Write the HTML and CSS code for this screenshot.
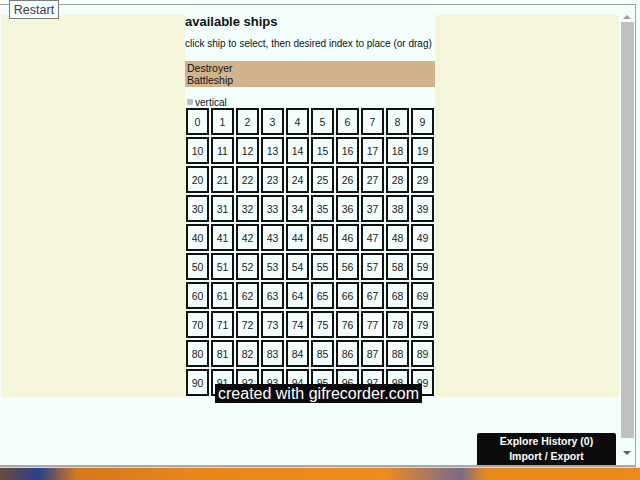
FILE: index.html
```html
<!DOCTYPE html>
<html>
<head>
<meta charset="utf-8">
<link rel="stylesheet" href="styles.css">
</head>
<body>
<div class="window">
  <button class="restart">Restart</button>
  <div class="layout">
    <div class="side"></div>
    <div class="center">
      <h1 class="title">available ships</h1>
      <p class="hint">click ship to select, then desired index to place (or drag)</p>
      <div class="ships">
        <div class="ship">Destroyer</div>
        <div class="ship">Battleship</div>
      </div>
      <label class="vertical"><span class="check"></span>vertical</label>
      <div class="grid" id="grid"></div>
    </div>
    <div class="side"></div>
    <div class="scrollbar">
      <span class="arrow up"></span>
      <span class="thumb"></span>
      <span class="arrow down"></span>
    </div>
  </div>
  <div class="watermark">created with gifrecorder.com</div>
  <div class="history">
    <div>Explore History (0)</div>
    <div>Import / Export</div>
  </div>
</div>
<div class="desktop"></div>
<script>
  var g = document.getElementById('grid');
  for (var i = 0; i < 100; i++) {
    var c = document.createElement('div');
    c.className = 'cell';
    c.textContent = i;
    g.appendChild(c);
  }
</script>
</body>
</html>
```
FILE: styles.css
```css
html, body {
  margin: 0;
  padding: 0;
  height: 480px;
  overflow: hidden;
  background: #f4fffd;
  font-family: "Liberation Sans", Arial, sans-serif;
}
.window {
  position: relative;
  margin-top: 4px;
  height: 460px;
  border-top: 1px solid #a3a3a3;
  border-right: 1px solid #a3a3a3;
  border-bottom: 2px solid #a9a9a9;
  width: 635px;
}
.restart {
  position: absolute;
  left: 9px;
  top: -5px;
  height: 19px;
  width: 50px;
  padding: 0;
  border: 1px solid #7a7a7a;
  background: #f4fffd;
  color: #4a3550;
  font-family: "Liberation Sans", Arial, sans-serif;
  font-size: 12.5px;
  line-height: 16px;
}
.layout {
  display: flex;
  padding-top: 10px;
  height: 450px;
}
.side {
  width: 184px;
  height: 382px;
  background: #f5f5dc;
}
.layout > .side:first-child {
  margin-left: 1px;
}
.center {
  width: 250px;
  display: flex;
  flex-direction: column;
  height: 382px;
  overflow: hidden;
}
.title {
  margin: 0;
  font-size: 13px;
  font-weight: bold;
  line-height: 14px;
  height: 14px;
  color: #111;
}
.hint {
  margin: 9px 0 0;
  font-size: 10px;
  line-height: 12px;
  color: #111;
}
.ships {
  margin-top: 11px;
  height: 26px;
  background: #d2b48c;
  padding-left: 2px;
  font-size: 10.5px;
  line-height: 12px;
  padding-top: 1px;
  box-sizing: border-box;
  color: #111;
}
.vertical {
  display: flex;
  align-items: center;
  margin-top: 9px;
  height: 12px;
  font-size: 10px;
  color: #111;
  padding-left: 2px;
}
.check {
  width: 6px;
  height: 6px;
  background: #bdbdbd;
  border-radius: 1px;
  margin-right: 2px;
}
.grid {
  padding-left: 1px;
  display: grid;
  grid-template-columns: repeat(10, 23px);
  grid-auto-rows: 27px;
  gap: 2px;
}
.cell {
  border: 2px solid #111;
  box-sizing: border-box;
  display: flex;
  align-items: center;
  justify-content: center;
  font-size: 10.5px;
  color: #222;
  background: #f4fffd;
}
.scrollbar {
  margin-left: 1px;
  width: 14px;
  height: 450px;
  display: flex;
  flex-direction: column;
  align-items: center;
}
.arrow {
  width: 0;
  height: 0;
  border-left: 4px solid transparent;
  border-right: 4px solid transparent;
}
.arrow.up {
  border-bottom: 4px solid #a0a0a0;
}
.thumb {
  margin-top: 3px;
  width: 13px;
  height: 416px;
  background: #c0c0c0;
}
.arrow.down {
  margin-top: 13px;
  border-top: 4px solid #606060;
}
.watermark {
  position: absolute;
  left: 215px;
  top: 379px;
  width: 207px;
  height: 19px;
  background: #0a0a0a;
  color: #fff;
  font-size: 16px;
  line-height: 19px;
  text-align: center;
  white-space: nowrap;
}
.history {
  position: absolute;
  left: 477px;
  top: 428px;
  width: 139px;
  height: 32px;
  background: #0c0c0c;
  color: #fff;
  font-size: 10.5px;
  font-weight: bold;
  text-align: center;
  line-height: 15px;
  padding-top: 1px;
  box-sizing: border-box;
  border-radius: 2px 2px 0 0;
}
.desktop {
  height: 13px;
  border-top: 1px solid #d8d8d8;
  background: linear-gradient(90deg, #6b4a3a 0%, #2a3f8a 6%, #d4781e 12%, #e8861a 30%, #ef8c1c 60%, #7a6a8a 72%, #e88a1a 76%, #ec8a1c 100%);
}
```
